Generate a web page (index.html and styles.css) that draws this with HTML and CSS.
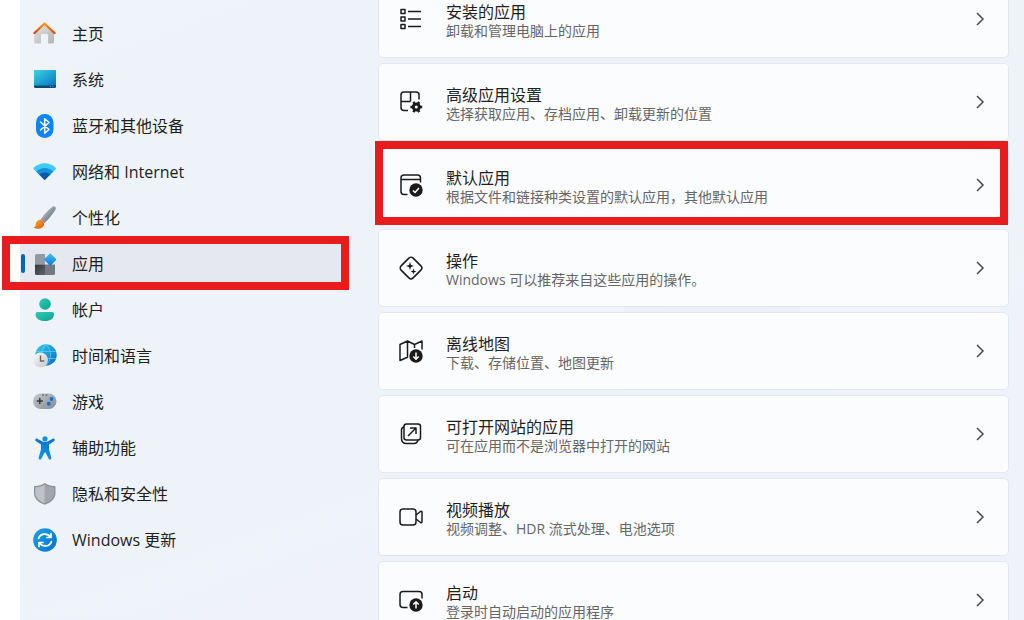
FILE: index.html
```html
<!DOCTYPE html>
<html lang="zh-CN">
<head>
    <meta charset="UTF-8">
    <meta name="viewport" content="width=device-width, initial-scale=1.0">
    <title>设置</title>
    <link rel="stylesheet" href="styles.css">
</head>
<body>
    <div class="window">
        <!-- Sidebar -->
        <nav class="sidebar">
            <a class="nav-item" href="#home">
                <svg class="nav-icon" viewBox="0 0 24 24">
                    <defs>
                        <linearGradient id="wall" x1="0" y1="0" x2="1" y2="1"><stop offset="0" stop-color="#e4e4e4"/><stop offset="1" stop-color="#b4b4b6"/></linearGradient>
                        <linearGradient id="roof" x1="0" y1="0" x2="0" y2="1"><stop offset="0" stop-color="#fb9a1c"/><stop offset="1" stop-color="#d9480f"/></linearGradient>
                    </defs>
                    <path fill="url(#wall)" d="M1.500 10.500 11.500 2l9.500 8.500V20a1.500 1.500 0 0 1-1.500 1.500H15V13a1 1 0 0 0-1-1H9a1 1 0 0 0-1 1v8.500H2.500A1.500 1.500 0 0 1 1 20z"/>
                    <path fill="none" stroke="url(#roof)" stroke-width="2.400" stroke-linecap="round" stroke-linejoin="round" d="M1.500 11 11.500 1.500 21.500 11"/>
                </svg>
                <span>主页</span>
            </a>
            <a class="nav-item" href="#system">
                <svg class="nav-icon" viewBox="0 0 24 24">
                    <defs><linearGradient id="screen" x1="0" y1="0" x2="1" y2="1"><stop offset="0" stop-color="#3bd5e6"/><stop offset="1" stop-color="#0a72c4"/></linearGradient></defs>
                    <rect x="1" y="2" width="22" height="18" rx="1.500" fill="#0c4a72"/>
                    <path fill="url(#screen)" d="M2.500 2h19A1.500 1.500 0 0 1 23 3.500V17.500H1v-14A1.500 1.500 0 0 1 2.500 2z"/>
                    <path stroke="#5bb5e0" d="M17 18.700h1M19.500 18.700h1"/>
                </svg>
                <span>系统</span>
            </a>
            <a class="nav-item" href="#bluetooth">
                <svg class="nav-icon" viewBox="0 0 24 24">
                    <rect x="3" y="0" width="17.500" height="24" rx="8.500" fill="#0a84ff"/>
                    <path fill="none" stroke="#fff" stroke-width="1.500" stroke-linejoin="round" stroke-linecap="round" d="M7.500 8 16 15.500l-4.300 3.700V4.800L16 8.500 7.500 16"/>
                </svg>
                <span>蓝牙和其他设备</span>
            </a>
            <a class="nav-item" href="#network">
                <svg class="nav-icon" viewBox="0 0 24 24">
                    <path fill="#3ccbf4" d="M.7 9.200a1 1 0 0 1 0-1.400c6.200-6 15.800-6 22 0a1 1 0 0 1 0 1.400L20 12H3.400z"/>
                    <path fill="#1490df" d="M3.200 11.700c4.900-4.800 12.100-4.800 17 0l-3.400 3.500H6.600z"/>
                    <path fill="#0c59a4" d="M6.300 14.800c3.100-3 7.700-3 10.800 0L12.500 19.500a1.200 1.200 0 0 1-1.700 0z"/>
                </svg>
                <span>网络和 Internet</span>
            </a>
            <a class="nav-item" href="#personalization">
                <svg class="nav-icon" viewBox="0 0 24 24">
                    <defs>
                        <linearGradient id="handle" x1="0" y1="0" x2="1" y2="1"><stop offset="0.300" stop-color="#a9b2ba"/><stop offset="0.800" stop-color="#69727b"/></linearGradient>
                        <linearGradient id="brush" x1="0" y1="0" x2="1" y2="1"><stop offset="0" stop-color="#ffb72b"/><stop offset="1" stop-color="#e0500b"/></linearGradient>
                    </defs>
                    <path fill="url(#handle)" d="M7.500 13.500C11 8.500 16 3 19.500.7c2-1.200 4.200.8 3 2.800C20.500 7.200 15.500 13.500 11.500 17z"/>
                    <path fill="url(#brush)" d="M.8 21.300c2-.4 1.700-2.200 2.200-4.200.7-2.800 3.800-4.200 6-2.700 2.500 1.500 2.800 4.700.7 6.600-2.400 2.100-6 2.300-8.700 1.100-.5-.2-.6-.7-.2-.8z"/>
                </svg>
                <span>个性化</span>
            </a>
            <a class="nav-item active" href="#apps" aria-current="page">
                <svg class="nav-icon" viewBox="0 0 24 24">
                    <defs>
                        <linearGradient id="tile" x1="0" y1="0" x2="1" y2="1"><stop offset="0" stop-color="#30343a"/><stop offset="1" stop-color="#60666c"/></linearGradient>
                        <linearGradient id="diamond" x1="0" y1="0" x2="1" y2="1"><stop offset="0" stop-color="#43c5f8"/><stop offset="1" stop-color="#0877d4"/></linearGradient>
                    </defs>
                    <path fill="#939aa3" d="M3.500 2H12v10.500H2v-9A1.500 1.500 0 0 1 3.500 2z"/>
                    <path fill="url(#tile)" d="M2 12.500h10V23H3.500A1.500 1.500 0 0 1 2 21.500z"/>
                    <path fill="#737a84" d="M12 12.500h10v9a1.500 1.500 0 0 1-1.500 1.500H12z"/>
                    <rect x="12.700" y="3" width="9" height="9" rx="1" transform="rotate(45 17.200 7.500)" fill="url(#diamond)"/>
                </svg>
                <span>应用</span>
            </a>
            <a class="nav-item" href="#accounts">
                <svg class="nav-icon" viewBox="0 0 24 24">
                    <defs><linearGradient id="person" x1="0" y1="0" x2="1" y2="1"><stop offset="0" stop-color="#2bd0b5"/><stop offset="1" stop-color="#0f9f91"/></linearGradient></defs>
                    <circle cx="12" cy="6" r="5.800" fill="url(#person)"/>
                    <path fill="url(#person)" d="M4.500 14h14.500a2 2 0 0 1 2 2c0 4.500-3.500 7-9.200 7S2.500 20.500 2.500 16a2 2 0 0 1 2-2z"/>
                </svg>
                <span>帐户</span>
            </a>
            <a class="nav-item" href="#time">
                <svg class="nav-icon" viewBox="0 0 24 24">
                    <defs>
                        <linearGradient id="globe" x1="0" y1="0" x2="1" y2="1"><stop offset="0" stop-color="#36cdf0"/><stop offset="1" stop-color="#0869c4"/></linearGradient>
                        <linearGradient id="clock" x1="0" y1="0" x2="1" y2="1"><stop offset="0" stop-color="#fafafa"/><stop offset="1" stop-color="#c7c7c9"/></linearGradient>
                    </defs>
                    <circle cx="13" cy="11" r="10.700" fill="url(#globe)"/>
                    <path fill="none" stroke="#68dcf6" stroke-width=".6" d="M3.200 7.500h19.600M3.200 14.500h19.600M13 .5c-6 6-6 15 0 21M13 .5c6 6 6 15 0 21"/>
                    <circle cx="7.500" cy="16" r="7.500" fill="url(#clock)"/>
                    <path fill="none" stroke="#666" stroke-width="1.400" d="M7.500 11.500v5.500h3.700"/>
                </svg>
                <span>时间和语言</span>
            </a>
            <a class="nav-item" href="#gaming">
                <svg class="nav-icon" viewBox="0 0 24 24">
                    <defs><linearGradient id="pad" x1="0" y1="0" x2="1" y2="1"><stop offset="0" stop-color="#c3c8cd"/><stop offset="1" stop-color="#858e97"/></linearGradient></defs>
                    <rect x="0" y="3.500" width="23.500" height="15.500" rx="7.700" fill="url(#pad)"/>
                    <path stroke="#33383e" stroke-width="1.500" stroke-linecap="round" d="M4.300 11h5M6.800 8.500v5"/>
                    <path stroke="#444a50" stroke-linecap="round" d="M9.500 5h1M13 5h1"/>
                    <circle cx="18.500" cy="9" r="1.900" fill="#0b6fd0"/>
                    <circle cx="15.800" cy="13.700" r="1.900" fill="#0b6fd0"/>
                </svg>
                <span>游戏</span>
            </a>
            <a class="nav-item" href="#accessibility">
                <svg class="nav-icon" viewBox="0 0 24 24">
                    <defs><linearGradient id="figure" x1="0" y1="0" x2="0" y2="1"><stop offset="0" stop-color="#0874d0"/><stop offset="1" stop-color="#1795e2"/></linearGradient></defs>
                    <circle cx="12" cy="2.800" r="2.600" fill="#1491df"/>
                    <path fill="url(#figure)" d="M4.300 2.700 9 5.200c2 1.100 4 1.100 6 0l4.700-2.500c1.700-.8 2.800 1.500 1.300 2.500l-5 3.300v5l2.400 8.200c.4 1.900-2 2.700-2.800 1L12.500 16.500h-1l-3.100 6.200c-.8 1.700-3.200.9-2.800-1L8 13.500V8.500L3 5.200C1.500 4.200 2.600 1.900 4.300 2.700z"/>
                </svg>
                <span>辅助功能</span>
            </a>
            <a class="nav-item" href="#privacy">
                <svg class="nav-icon" viewBox="0 0 24 24">
                    <path fill="#8c9197" d="M11.800 1C14.500 3 18 4 21.500 4a1 1 0 0 1 1 1v6c0 5.500-4 9.300-10.700 11.700C5 20.300 1 16.500 1 11V5a1 1 0 0 1 1-1C5.500 4 9 3 11.800 1z"/>
                    <path fill="#bfc3c7" d="M11.800 2.500V21.300C5.800 19 2.300 15.700 2.300 11V5.300C6 5.200 9.300 4.200 11.800 2.500z"/>
                    <path fill="#a2a6ab" d="M11.800 2.500V21.300c5.900-2.300 9.400-5.600 9.400-10.300V5.300c-3.600-.1-6.900-1.100-9.400-2.800z"/>
                </svg>
                <span>隐私和安全性</span>
            </a>
            <a class="nav-item" href="#update">
                <svg class="nav-icon" viewBox="0 0 24 24">
                    <defs><linearGradient id="update" x1="0" y1="0" x2="1" y2="1"><stop offset="0" stop-color="#1ba3e8"/><stop offset="1" stop-color="#0870cc"/></linearGradient></defs>
                    <circle cx="12" cy="12" r="11.800" fill="url(#update)"/>
                    <path fill="none" stroke="#fff" stroke-width="1.700" stroke-linecap="round" stroke-linejoin="round" d="M5.500 10.500C7.200 5.500 14 4.300 17.500 9M18 5.500V9.500h-4M18.500 13.500C16.800 18.500 10 19.700 6.500 15M6 18.500V14.500h4"/>
                </svg>
                <span>Windows 更新</span>
            </a>
        </nav>

        <!-- App settings -->
        <main class="cards">
            <a class="card" href="#installed">
                <svg class="card-icon" viewBox="0 0 24 24">
                    <path d="M2 2.500h4v4H2zM2 10h4v4H2zM2 17.500h4v4H2zM9 4.500h13M9 12h13M9 19.500h13"/>
                </svg>
                <span class="copy"><span class="title">安装的应用</span><span class="desc">卸载和管理电脑上的应用</span></span>
                <svg class="chevron" viewBox="0 0 12 16"><path d="m3 2 6 6-6 6"/></svg>
            </a>
            <a class="card" href="#advanced">
                <svg class="card-icon" viewBox="0 0 24 24">
                    <path d="M9 20.500H5a3 3 0 0 1-3-3V5a3 3 0 0 1 3-3h12a3 3 0 0 1 3 3v4.500M11.500 2v9.500M2 11.500h9.500"/>
                    <circle class="ring" cx="17.300" cy="17" r="3"/>
                    <path class="teeth" d="M20.800 17h2.400M11.400 17h2.400M19 20l1.200 2.100M14.400 11.900l1.200 2.100M15.600 20l-1.200 2.100M20.200 11.900 19 14"/>
                </svg>
                <span class="copy"><span class="title">高级应用设置</span><span class="desc">选择获取应用、存档应用、卸载更新的位置</span></span>
                <svg class="chevron" viewBox="0 0 12 16"><path d="m3 2 6 6-6 6"/></svg>
            </a>
            <a class="card marked" href="#defaults">
                <svg class="card-icon" viewBox="0 0 24 24">
                    <path d="M8.500 21.500H5a3 3 0 0 1-3-3V5a3 3 0 0 1 3-3h13.500a3 3 0 0 1 3 3v4.500M2 6.500h19.500"/>
                    <circle class="solid" cx="17" cy="17" r="6.700"/>
                    <path class="cutout" d="m14 17.500 2 2 4-4.500"/>
                </svg>
                <span class="copy"><span class="title">默认应用</span><span class="desc">根据文件和链接种类设置的默认应用，其他默认应用</span></span>
                <svg class="chevron" viewBox="0 0 12 16"><path d="m3 2 6 6-6 6"/></svg>
            </a>
            <a class="card" href="#actions">
                <svg class="card-icon" viewBox="0 0 24 24">
                    <rect x="3.500" y="3.500" width="17" height="17" rx="3" transform="rotate(45 12 12)"/>
                    <path class="solid" d="m11 6 1 3 3 1-3 1-1 3-1-3-3-1 3-1zM14.500 12.500l.8 2.200 2.200.8-2.200.8-.8 2.200-.8-2.200-2.200-.8 2.200-.8z"/>
                </svg>
                <span class="copy"><span class="title">操作</span><span class="desc">Windows 可以推荐来自这些应用的操作。</span></span>
                <svg class="chevron" viewBox="0 0 12 16"><path d="m3 2 6 6-6 6"/></svg>
            </a>
            <a class="card" href="#maps">
                <svg class="card-icon" viewBox="0 0 24 24">
                    <path d="M9 18 1 21.500V5.500L8.500 2l7 3.500L23 2v8.500M8.500 2v16M15.500 5.500V9"/>
                    <circle class="solid" cx="17" cy="17" r="6.700"/>
                    <path class="cutout" d="M17 13.500v6.500M14.300 17.500 17 20.200l2.700-2.700"/>
                </svg>
                <span class="copy"><span class="title">离线地图</span><span class="desc">下载、存储位置、地图更新</span></span>
                <svg class="chevron" viewBox="0 0 12 16"><path d="m3 2 6 6-6 6"/></svg>
            </a>
            <a class="card" href="#websites">
                <svg class="card-icon" viewBox="0 0 24 24">
                    <rect x="5" y="2" width="16.500" height="16" rx="2.500"/>
                    <path d="M5 5C3 5.300 2.500 6.500 2.500 8v8.500c0 3 2 5 5 5H15c2 0 3.500-1 4-3.500M9 14l8-8M11 6h6v6"/>
                </svg>
                <span class="copy"><span class="title">可打开网站的应用</span><span class="desc">可在应用而不是浏览器中打开的网站</span></span>
                <svg class="chevron" viewBox="0 0 12 16"><path d="m3 2 6 6-6 6"/></svg>
            </a>
            <a class="card" href="#video">
                <svg class="card-icon" viewBox="0 0 24 24">
                    <rect x="1" y="4" width="16" height="16" rx="3"/>
                    <path d="m17 10 4.500-3.500c.8-.5 1.500 0 1.500.5v10c0 .5-.7 1-1.500.5L17 14"/>
                </svg>
                <span class="copy"><span class="title">视频播放</span><span class="desc">视频调整、HDR 流式处理、电池选项</span></span>
                <svg class="chevron" viewBox="0 0 12 16"><path d="m3 2 6 6-6 6"/></svg>
            </a>
            <a class="card" href="#startup">
                <svg class="card-icon" viewBox="0 0 24 24">
                    <path d="M8.500 19.500H4a3 3 0 0 1-3-3V6.500a3 3 0 0 1 3-3h16a3 3 0 0 1 3 3v4"/>
                    <circle class="solid" cx="17" cy="17" r="6.700"/>
                    <path class="cutout" d="M17 20.500V14M14.300 16.500 17 13.800l2.700 2.700"/>
                </svg>
                <span class="copy"><span class="title">启动</span><span class="desc">登录时自动启动的应用程序</span></span>
                <svg class="chevron" viewBox="0 0 12 16"><path d="m3 2 6 6-6 6"/></svg>
            </a>
        </main>
    </div>
</body>
</html>
```

FILE: styles.css
```css
* {
    box-sizing: border-box;
}
body {
    margin: 0;
    height: 100vh;
    overflow: hidden;
    background-color: #fff;
    color: #1f1f1f;
    font-family: "Open Sans", "Noto Sans CJK SC", sans-serif;
    font-size: 16px;
}
a {
    color: inherit;
    text-decoration: none;
}
svg {
    flex: none;
}
.window {
    display: flex;
    gap: 37px;
    height: 100%;
    margin-left: 20px;
    padding-right: 15px;
    background: linear-gradient(160deg, #eff3fb 0%, #edf3f8 22%, #edf3f8 52%, #eff2fb 70%, #eff2fb 100%);
}
.sidebar {
    flex: 0 0 321px;
    padding-top: 11px;
}
.nav-item {
    position: relative;
    display: flex;
    align-items: center;
    gap: 15px;
    height: 46px;
    padding-left: 13px;
}
.nav-item span {
    padding-bottom: 2px;
}
.nav-icon {
    width: 24px;
    height: 24px;
}
.nav-item.active {
    background-color: #e5e8ee;
}
.nav-item.active::before {
    content: "";
    position: absolute;
    left: 1px;
    top: 13px;
    width: 4px;
    height: 19px;
    border-radius: 2px;
    background-color: #0067c0;
}
/* red highlight frames */
.nav-item.active::after,
.card.marked::after {
    content: "";
    position: absolute;
    border: 8px solid #e81c1c;
}
.nav-item.active::after {
    inset: -5px -8px -3px -18px;
}
.card.marked::after {
    inset: -6px 0 -2px -4px;
}
/* list is scrolled a little past its first card */
.cards {
    flex: 1;
    display: flex;
    flex-direction: column;
    gap: 5px;
    margin-top: -20px;
}
.card {
    position: relative;
    flex: none;
    display: flex;
    align-items: center;
    gap: 23px;
    height: 78px;
    padding: 0 22px 0 20px;
    border: 1px solid #e3e8ef;
    border-radius: 5px;
    background-color: #fbfcfe;
}
.card-icon {
    width: 24px;
    height: 24px;
    fill: none;
    stroke: #1b1b1b;
    stroke-width: 1.5;
    stroke-linejoin: round;
}
.card-icon .solid {
    fill: #1b1b1b;
    stroke: none;
}
.card-icon .cutout {
    stroke: #fff;
}
.card-icon .ring {
    stroke-width: 3;
}
.card-icon .teeth {
    stroke-width: 2.5;
}
.copy {
    flex: 1;
    display: flex;
    flex-direction: column;
    padding-top: 4px;
}
.title {
    line-height: 20px;
}
.desc {
    font-size: 14px;
    line-height: 18px;
    color: #666;
}
.chevron {
    width: 12px;
    height: 16px;
    fill: none;
    stroke: #4a4a4a;
    stroke-width: 1.5;
}
```
